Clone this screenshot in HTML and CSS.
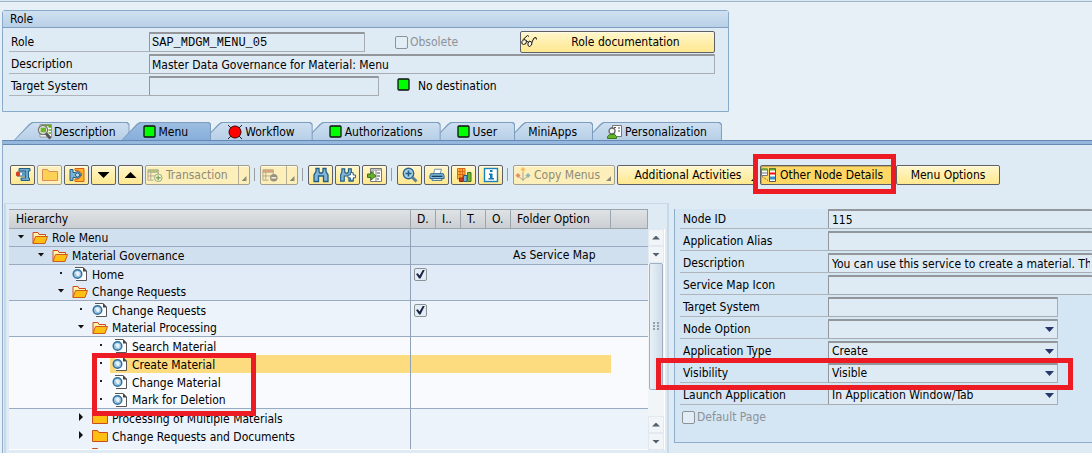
FILE: index.html
```html
<!DOCTYPE html>
<html lang="en">
<head>
<meta charset="utf-8">
<title>Change Roles</title>
<link rel="stylesheet" href="styles.css">
</head>
<body>
<svg class="sprite" aria-hidden="true">
  <symbol id="i-open" viewBox="0 0 16 14"><path d="M1 12.500V1.500H6L7 3.500H13.500V6" fill="#fff3b0" stroke="#cf4a1c"/><path d="M1 12.500L3.500 5.500H15.500L13 12.500Z" fill="#fdbf12" stroke="#cf5a1c"/></symbol>
  <symbol id="i-closed" viewBox="0 0 16 14"><path d="M.5 12.500V1.500H5.500L7 3.500H15.500V12.500Z" fill="#fdbf12" stroke="#cf4a1c"/></symbol>
  <symbol id="i-page" viewBox="0 0 16 16"><path d="M3 1.500H11L14.500 5V14.500H4" fill="#fff" stroke="#555"/><path d="M11 1V5.500H15Z" fill="#444"/><circle cx="5.500" cy="8" r="4.300" fill="#9cc3dd" stroke="#2f6f9f" stroke-width="1.400"/><path d="M3 6.500L5.500 5L8 7L7 10H5Z" fill="#e2f1fa"/></symbol>
  <symbol id="i-green" viewBox="0 0 14 14"><rect x="1" y="1" width="11" height="11" rx="1" fill="#0f0" stroke="#111" stroke-width="1.300"/></symbol>
  <symbol id="i-red" viewBox="0 0 16 16"><path d="M1 1L15 15M15 1L1 15" stroke="#222"/><circle cx="8" cy="8" r="6" fill="#f00" stroke="#400"/></symbol>
  <symbol id="i-find" viewBox="0 0 16 16"><path d="M3 .5H14.500V13H3Z" fill="#fff" stroke="#999"/><path d="M11.500 3H14M11.500 6H14M11.500 9H14M5 1.500H14" stroke="#68a525" stroke-width="1.600"/><circle cx="6" cy="6" r="4.500" fill="#fff" stroke="#777" stroke-width="1.400"/><rect x="3.500" y="3.500" width="5.500" height="5" fill="#72b52c"/><path d="M9 9.500L13.500 14.500" stroke="#555" stroke-width="3"/></symbol>
  <symbol id="i-person" viewBox="0 0 16 16"><path d="M5.500 4V1.500H14.500V12.500H10" fill="#fff" stroke="#777"/><path d="M11 4H13M11 7H13M7 3.500H9" stroke="#555"/><circle cx="5" cy="7" r="3" fill="#f4f4f4" stroke="#666" stroke-width="1.300"/><path d="M.5 14.500V12.500L2.500 10.500H7.500L9.500 12.500V14.500Z" fill="#65b22e" stroke="#3d7d17"/></symbol>
  <symbol id="i-glasses" viewBox="0 0 16 16"><path d="M1.500 6L6.500 1.500L8 2.500M10.500 9L13 4L15 3.500L15.500 5.500M5.500 7.500L7.500 8" fill="none" stroke="#111"/><path d="M1 7.500L3 5.500L5.500 6.500L5 9.500L2.500 10.500L.8 9.500ZM7 9.500L8.500 7L11 8.500L10.500 11L8.500 12.500L7 11.500Z" fill="#fffbe6" stroke="#111"/></symbol>
  <symbol id="i-clamp" viewBox="0 0 16 16"><path d="M4 1.500H15V4H13.500V11H14.500V13.500H6V11H10.500V4H4Z" fill="#70a9ce" stroke="#245f88"/><path d="M2 5H10.500V9H2Z" fill="#f4f8fa" stroke="#245f88"/><path d="M7 5.500H10.500V8.500H7Z" fill="#4f98c5"/><circle cx="3" cy="7" r="2.200" fill="#e1391d"/></symbol>
  <symbol id="i-cut" viewBox="0 0 16 16"><path d="M6 1.500H15V14.500H6V12H9L12.500 9V6L9 3.500H6Z" fill="#fbb52b" stroke="#dd5d18"/><path d="M1 2.500H4V5.500H6Q10 3 12 8Q10 12.500 6 10.500H4V13.500H1Z" fill="#78b1d4" stroke="#245f88"/><circle cx="8.500" cy="8" r="2" fill="#c8e2f1" stroke="#245f88"/></symbol>
  <symbol id="i-addrow" viewBox="0 0 17 16"><path d="M1 2.500H12V5H1Z" fill="#80bb40" stroke="#777"/><path d="M1 5V13.500H7M1 9H9M4 5V13M12 5V7" fill="none" stroke="#777"/><circle cx="12" cy="11" r="4" fill="#eef8df" stroke="#557b4c"/><path d="M12 8.500V13.500M9.500 11H14.500" stroke="#36772f" stroke-width="1.500"/></symbol>
  <symbol id="i-delrow" viewBox="0 0 17 16"><path d="M1 2.500H12V5H1Z" fill="#ed733b" stroke="#777"/><path d="M1 5V13.500H7M1 9H9M4 5V13M12 5V7" fill="none" stroke="#777"/><circle cx="12.500" cy="11" r="4" fill="#555"/><path d="M10 11H15" stroke="#fff" stroke-width="1.500"/></symbol>
  <symbol id="i-bino" viewBox="0 0 16 16"><path d="M3 1.500H6V4.500L7 6H9L10 4.500V1.500H13V4.500L15 8V14.500H10.500V9H5.500V14.500H1V8L3 4.500Z" fill="#83b6d6" stroke="#1f5d87" stroke-width="1.300"/></symbol>
  <symbol id="i-binoplus" viewBox="0 0 17 16"><path d="M2 1.500H5V4.500L6 6H8L9 4.500V1.500H12V4.500L14 8V14.500H9.500V9H4.500V14.500H.7V8L2 4.500Z" fill="#83b6d6" stroke="#1f5d87" stroke-width="1.200"/><path d="M11 5.500H14V8H16.500V11H14V13.500H11V11H8.500V8H11Z" fill="#fff" stroke="#1f5d87"/></symbol>
  <symbol id="i-import" viewBox="0 0 16 16"><path d="M3.500 1.500H14.500V14.500H3.500Z" fill="#fff" stroke="#777"/><path d="M4 3H14M9 3V14" stroke="#aaa" stroke-width="1.500"/><path d="M10 6H13M10 9H13M10 12H12M5 5H7" stroke="#444"/><path d="M.5 7H4V4.500L9 9L4 13V10.500H.5Z" fill="#68ad2d" stroke="#3b771a"/></symbol>
  <symbol id="i-zoom" viewBox="0 0 16 16"><circle cx="6.500" cy="6.500" r="5.200" fill="#a9d0e6" stroke="#2a6690" stroke-width="1.400"/><path d="M6.500 3.500V9.500M3.500 6.500H9.500" stroke="#205c86" stroke-width="1.600"/><path d="M10.500 10.500L14.500 14.500" stroke="#607d92" stroke-width="3"/></symbol>
  <symbol id="i-print" viewBox="0 0 18 16"><path d="M5 7L6.500 1.500H14L12.500 7Z" fill="#fff" stroke="#64869c"/><path d="M2 6.500H16L17 9V12H1V9Z" fill="#83b6d6" stroke="#1f5d87"/><path d="M3 9.500H15" stroke="#173f5d" stroke-width="1.500"/><path d="M3.500 12H14.500V14H3.500Z" fill="#fff" stroke="#1f5d87"/></symbol>
  <symbol id="i-chart" viewBox="0 0 16 16"><path d="M1.500 1.500H9V12H1.500Z" fill="#ffb62d" stroke="#dd671b"/><path d="M4 2V12M6.500 2V12M1 4.500H9M1 7.500H9" stroke="#dd671b"/><path d="M3.500 11V14.500H7V11Z" fill="#e1391d" stroke="#842c18"/><path d="M7.500 8.500V14.500H11V8.500Z" fill="#79b3d7" stroke="#245f88"/><path d="M11.500 5.500V14.500H15V5.500Z" fill="#71b337" stroke="#3b771a"/></symbol>
  <symbol id="i-info" viewBox="0 0 16 16"><rect x="1.500" y="1.500" width="13" height="13" fill="#fff" stroke="#1683bd" stroke-width="1.400"/><path d="M7 3H9.500V5H7ZM6 6.500H9.500V11H11V12.500H5.500V11H7V8H6Z" fill="#1678b2"/></symbol>
  <symbol id="i-copy" viewBox="0 0 16 16"><path d="M8 5V14M3 9L8 13L13 9" fill="none" stroke="#777"/><path d="M8 0L10.500 2.500L8 5L5.500 2.500Z" fill="#f59a28"/><path d="M3 6L5.500 8.500L3 11L.5 8.500Z" fill="#d64f32"/><path d="M13 6L15.500 8.500L13 11L10.500 8.500Z" fill="#4c8eb9"/></symbol>
  <symbol id="i-details" viewBox="0 0 16 15"><path d="M.5 1.500H6.500V8H.5Z" fill="#fff" stroke="#777"/><path d="M1 2H6.500" stroke="#64a52b" stroke-width="2"/><path d="M1 5.500H6" stroke="#777"/><path d="M8.500 1H14.500V14H8.500Z" fill="#fff" stroke="#555"/><path d="M9 2H14" stroke="#64a52b" stroke-width="2"/><path d="M9 6H14" stroke="#e11" stroke-width="2"/><path d="M9 10.500H14" stroke="#3192cc" stroke-width="3"/><path d="M1 9L7 13" stroke="#555" stroke-dasharray="1 1"/></symbol>
</svg>

<main class="page">
  <section class="role-box">
    <h1 class="role-title">Role</h1>
    <div class="role-form">
      <label class="lbl" for="role">Role</label>
      <div class="line">
        <input class="field field-role mono" id="role" value="SAP_MDGM_MENU_05" readonly>
        <label class="check muted"><input type="checkbox" class="box" disabled>Obsolete</label>
        <button class="btn doc-btn"><svg class="ico"><use href="#i-glasses"/></svg><span class="grow">Role documentation</span></button>
      </div>
      <label class="lbl" for="desc">Description</label>
      <input class="field" id="desc" value="Master Data Governance for Material: Menu" readonly>
      <label class="lbl" for="target">Target System</label>
      <div class="line">
        <input class="field field-target" id="target" readonly>
        <span class="status"><svg class="ico-s"><use href="#i-green"/></svg>No destination</span>
      </div>
    </div>
  </section>

  <nav class="tabs" role="tablist">
    <button class="tab tab-first" role="tab"><svg class="ico"><use href="#i-find"/></svg>Description</button>
    <button class="tab active" role="tab" aria-selected="true"><svg class="ico-s"><use href="#i-green"/></svg>Menu</button>
    <button class="tab" role="tab"><svg class="ico"><use href="#i-red"/></svg>Workflow</button>
    <button class="tab" role="tab"><svg class="ico-s"><use href="#i-green"/></svg>Authorizations</button>
    <button class="tab" role="tab"><svg class="ico-s"><use href="#i-green"/></svg>User</button>
    <button class="tab tab-text" role="tab">MiniApps</button>
    <button class="tab tab-last" role="tab"><svg class="ico"><use href="#i-person"/></svg>Personalization</button>
  </nav>

  <section class="panel">
    <div class="toolbar" role="toolbar">
      <button class="btn sq" aria-label="Insert"><svg class="ico"><use href="#i-clamp"/></svg></button>
      <button class="btn sq off" disabled aria-label="Folder"><svg class="ico"><use href="#i-closed"/></svg></button>
      <button class="btn sq" aria-label="Reassign"><svg class="ico"><use href="#i-cut"/></svg></button>
      <button class="btn sq" aria-label="Down"><span class="big down"></span></button>
      <button class="btn sq" aria-label="Up"><span class="big up"></span></button>
      <button class="btn off split transaction" disabled><svg class="ico"><use href="#i-addrow"/></svg><span>Transaction</span><span class="drop"></span></button>
      <span class="sep"></span>
      <button class="btn off split remove" disabled aria-label="Delete"><svg class="ico"><use href="#i-delrow"/></svg><span class="drop"></span></button>
      <span class="sep"></span>
      <button class="btn sq" aria-label="Find"><svg class="ico"><use href="#i-bino"/></svg></button>
      <button class="btn sq" aria-label="Find next"><svg class="ico"><use href="#i-binoplus"/></svg></button>
      <button class="btn sq" aria-label="Import"><svg class="ico"><use href="#i-import"/></svg></button>
      <span class="sep"></span>
      <button class="btn sq" aria-label="Preview"><svg class="ico"><use href="#i-zoom"/></svg></button>
      <button class="btn sq" aria-label="Print"><svg class="ico"><use href="#i-print"/></svg></button>
      <button class="btn sq" aria-label="Chart"><svg class="ico"><use href="#i-chart"/></svg></button>
      <button class="btn sq" aria-label="Information"><svg class="ico"><use href="#i-info"/></svg></button>
      <span class="sep"></span>
      <button class="btn off split copy" disabled><svg class="ico"><use href="#i-copy"/></svg><span>Copy Menus</span><span class="drop plain"></span></button>
      <button class="btn activities"><span class="grow">Additional Activities</span><span class="drop plain"></span></button>
      <div class="marked"><button class="btn pressed" aria-pressed="true"><svg class="ico"><use href="#i-details"/></svg>Other Node Details</button><span class="mark mark-button"></span></div>
      <button class="btn options">Menu Options</button>
    </div>

    <div class="split-view">
      <div class="tree-frame">
        <div class="tree-view">
          <table class="tree">
            <colgroup><col><col class="c-s"><col class="c-s"><col class="c-s"><col class="c-s"><col class="c-opt"><col class="c-end"></colgroup>
            <thead><tr><th class="h-main">Hierarchy</th><th>D.</th><th>I..</th><th>T.</th><th>O.</th><th>Folder Option</th><th></th></tr></thead>
            <tbody>
              <tr class="t1 rule"><td><div class="node l1"><i class="tg open"></i><span class="item"><svg class="ico"><use href="#i-open"/></svg>Role Menu</span></div></td><td></td><td></td><td></td><td></td><td></td><td></td></tr>
              <tr class="t1 rule"><td><div class="node l2"><i class="tg open"></i><span class="item"><svg class="ico"><use href="#i-open"/></svg>Material Governance</span></div></td><td></td><td></td><td></td><td></td><td>As Service Map</td><td></td></tr>
              <tr class="t2"><td><div class="node l3"><i class="tg dot"></i><span class="item"><svg class="ico"><use href="#i-page"/></svg>Home</span></div></td><td><input type="checkbox" class="box" checked aria-label="Home"></td><td></td><td></td><td></td><td></td><td></td></tr>
              <tr class="t2 rule"><td><div class="node l3"><i class="tg open"></i><span class="item"><svg class="ico"><use href="#i-open"/></svg>Change Requests</span></div></td><td></td><td></td><td></td><td></td><td></td><td></td></tr>
              <tr class="t3"><td><div class="node l4"><i class="tg dot"></i><span class="item"><svg class="ico"><use href="#i-page"/></svg>Change Requests</span></div></td><td><input type="checkbox" class="box" checked aria-label="Change Requests"></td><td></td><td></td><td></td><td></td><td></td></tr>
              <tr class="t3 rule"><td><div class="node l4"><i class="tg open"></i><span class="item"><svg class="ico"><use href="#i-open"/></svg>Material Processing</span></div></td><td></td><td></td><td></td><td></td><td></td><td></td></tr>
              <tr class="t4"><td><div class="node l5"><i class="tg dot"></i><span class="item"><svg class="ico"><use href="#i-page"/></svg>Search Material</span></div></td><td></td><td></td><td></td><td></td><td></td><td></td></tr>
              <tr class="t4 sel"><td><div class="node l5"><i class="tg dot"></i><span class="item"><svg class="ico"><use href="#i-page"/></svg>Create Material</span></div></td><td></td><td></td><td></td><td></td><td></td><td></td></tr>
              <tr class="t4"><td><div class="node l5"><i class="tg dot"></i><span class="item"><svg class="ico"><use href="#i-page"/></svg>Change Material</span></div></td><td></td><td></td><td></td><td></td><td></td><td></td></tr>
              <tr class="t4 rule"><td><div class="node l5"><i class="tg dot"></i><span class="item"><svg class="ico"><use href="#i-page"/></svg>Mark for Deletion</span></div></td><td></td><td></td><td></td><td></td><td></td><td></td></tr>
              <tr class="t3"><td><div class="node l4"><i class="tg shut"></i><span class="item"><svg class="ico"><use href="#i-closed"/></svg>Processing of Multiple Materials</span></div></td><td></td><td></td><td></td><td></td><td></td><td></td></tr>
              <tr class="t3"><td><div class="node l4"><i class="tg shut"></i><span class="item"><svg class="ico"><use href="#i-closed"/></svg>Change Requests and Documents</span></div></td><td></td><td></td><td></td><td></td><td></td><td></td></tr>
              <tr class="t3"><td><div class="node l4"><i class="tg"></i><span class="item"><svg class="ico"><use href="#i-closed"/></svg></span></div></td><td></td><td></td><td></td><td></td><td></td><td></td></tr>
            </tbody>
          </table>
          <span class="mark mark-nodes"></span>
        </div>
        <div class="scroll" aria-hidden="true">
          <span class="sb sb-up"></span><span class="sb sb-down"></span>
          <span class="track"><span class="thumb"><span class="grip"></span></span></span>
          <span class="sb sb-up"></span><span class="sb sb-down"></span>
        </div>
      </div>

      <div class="details">
        <label class="lbl" for="nid">Node ID</label><input class="field wide" id="nid" value="115" readonly>
        <label class="lbl" for="alias">Application Alias</label><input class="field wide" id="alias" readonly>
        <label class="lbl" for="ndesc">Description</label><input class="field wide" id="ndesc" value="You can use this service to create a material. Th" readonly>
        <label class="lbl" for="smi">Service Map Icon</label><input class="field wide" id="smi" readonly>
        <label class="lbl" for="tsys">Target System</label><input class="field short" id="tsys" readonly>
        <label class="lbl" for="nopt">Node Option</label><div class="pick"><select class="field" id="nopt"><option></option></select></div>
        <label class="lbl" for="atype">Application Type</label><div class="pick"><select class="field" id="atype"><option>Create</option></select></div>
        <label class="lbl" for="vis">Visibility</label><div class="pick"><select class="field" id="vis"><option>Visible</option></select></div>
        <label class="lbl" for="launch">Launch Application</label><div class="pick"><select class="field" id="launch"><option>In Application Window/Tab</option></select></div>
        <label class="check muted default-page"><input type="checkbox" class="box" disabled>Default Page</label>
        <span class="mark mark-row"></span>
      </div>
    </div>
  </section>
</main>
</body>
</html>
```
FILE: styles.css
```css
* { box-sizing: border-box; }
body {
  margin: 0;
  height: 100vh;
  overflow: hidden;
  background: #e8f0f7;
  color: #000;
  font: 12px/16px "DejaVu Sans Condensed", "DejaVu Sans", "Noto Sans", sans-serif;
}
button, input, select { font: inherit; color: inherit; margin: 0; }
.sprite { display: none; }
.ico { width: 16px; height: 16px; flex: none; }
.ico-s { width: 14px; height: 14px; flex: none; }
.page {
  display: flex;
  flex-direction: column;
  min-height: 100vh;
  border-top: 1px solid #dce7f0;
  padding-left: 2px;
}
.page::before { content: ""; height: 1px; margin-left: -2px; background: #9db6c8; }

/* Role header */
.role-box {
  width: 67%;
  max-width: 727px;
  margin-top: 8px;
  padding-bottom: 15px;
  border: 1px solid #88aacb;
  border-radius: 3px 3px 0 0;
  background: #deeaf4;
}
.role-title {
  margin: 0;
  height: 17px;
  padding-left: 7px;
  border-bottom: 1px solid #7f9fc2;
  background: linear-gradient(#cfe0f0, #b9d0e7);
  font-size: 12px;
  font-weight: normal;
  line-height: 16px;
}
.role-form {
  display: grid;
  grid-template-columns: 140px 1fr;
  grid-auto-rows: 20px;
  row-gap: 2px;
  padding: 4px 13px 0 6px;
}
.lbl { padding-left: 2px; border-bottom: 1px solid #aeb4b9; line-height: 21px; white-space: nowrap; }
.field {
  width: 100%;
  min-width: 0;
  height: 20px;
  padding: 0 2px;
  border: 1px solid #a8acb0;
  border-top: 2px solid #93979b;
  border-left-color: #93979b;
  border-radius: 1px;
  background: #deebf5;
  outline: none;
}
.line { display: flex; align-items: center; min-width: 0; }
.field.mono { font-family: "Liberation Mono", monospace; }
.field-role { width: 216px; }
.field-target { width: 230px; }
.check { display: flex; align-items: center; gap: 2px; margin-left: 30px; }
.muted { color: #8c9298; }
.box {
  appearance: none;
  flex: none;
  display: grid;
  place-items: center;
  width: 13px;
  height: 13px;
  border: 1px solid #8d9297;
  border-radius: 2px;
  background: #e3edf5;
}
.box:checked::before {
  content: "";
  width: 9px;
  height: 9px;
  background: #1c2545;
  clip-path: polygon(0 50%, 20% 42%, 40% 68%, 78% 0, 100% 0, 50% 100%, 34% 100%);
}
.status { display: flex; align-items: center; gap: 7px; margin-left: 18px; }
.status .ico-s { margin-bottom: 2px; }

/* Buttons */
.btn {
  display: flex;
  align-items: center;
  justify-content: center;
  height: 20px;
  padding: 0;
  border: 1px solid #5f6063;
  border-radius: 2px;
  background: linear-gradient(#fff6cc, #ffe88f);
  box-shadow: inset 0 1px #fffbe6;
  white-space: nowrap;
}
.doc-btn { width: 195px; height: 22px; margin-left: auto; }
.grow { flex: 1; text-align: center; }
.sq { width: 25px; }
.off { border-color: #a39f8e; background: #fcefba; color: #8f8b78; }
.off .ico { opacity: .6; }
.split { justify-content: flex-start; padding-left: 1px; gap: 3px; }
.drop {
  align-self: stretch;
  width: 11px;
  margin-left: auto;
  border-left: 1px solid #b5ae93;
  display: flex;
  align-items: flex-end;
  justify-content: center;
}
.drop::after {
  content: "";
  width: 5px;
  height: 5px;
  margin-bottom: 3px;
  background: currentColor;
  clip-path: polygon(100% 0, 100% 100%, 0 100%);
}
.plain { border-left: 0; margin-left: auto; }
.transaction { width: 105px; }
.remove { width: 38px; }
.copy { width: 102px; }
.activities { width: 141px; padding-left: 8px; }
.activities .drop { width: 7px; }
.options { width: 104px; }
.pressed { width: 134px; gap: 3px; justify-content: flex-start; background: #ffd765; box-shadow: inset 1px 1px #c9a955; }
.big { width: 12px; height: 6px; background: #000; }
.down { clip-path: polygon(0 0, 100% 0, 50% 100%); }
.up { clip-path: polygon(50% 0, 100% 100%, 0 100%); }

/* Tabs */
.tabs { display: flex; height: 18px; margin-top: 10px; padding-left: 12px; isolation: isolate; }
.tab {
  position: relative;
  z-index: 1;
  display: flex;
  align-items: center;
  height: 18px;
  margin-left: -8px;
  padding: 2px 18px 0 24px;
  gap: 2px;
  border: 0;
  background: none;
  white-space: nowrap;
}
.tab::before, .tab::after {
  content: "";
  position: absolute;
  z-index: -1;
  inset: 0;
  background: #7d9dbf;
  clip-path: polygon(0 100%, 15px 2px, 18px 0, calc(100% - 2px) 0, 100% 2px, 100% 100%);
}
.tab::after {
  inset: 1px 1px 0;
  background: linear-gradient(#cddff0, #b7cfe7);
}
.tab:nth-child(3) { z-index: 0; }
.tab:nth-child(4) { z-index: -1; }
.tab:nth-child(5) { z-index: -2; }
.tab:nth-child(6) { z-index: -3; }
.tab:nth-child(7) { z-index: -4; }
.tab-first { margin-left: 0; padding-left: 23px; padding-right: 14px; gap: 1px; }
.tab.active { z-index: 3; padding-left: 21px; padding-right: 23px; }
.tab.active::after { background: linear-gradient(#9cbde0, #87aedb); }
.tab-text { padding-left: 21px; padding-right: 16px; }
.tab-last { padding-left: 22px; padding-right: 15px; }

/* Menu tab contents */
.panel {
  flex: 1;
  border-top: 1px solid #6489b5;
  border-left: 1px solid #8eaccb;
  background: #dfebf4;
}
.panel::before { content: ""; display: block; height: 3px; background: #95b7dd; border-bottom: 1px solid #6489b5; }
.toolbar { display: flex; align-items: flex-start; gap: 2px; padding: 20px 0 0 7px; }
.sep { width: 1px; height: 13px; margin: 3px 3px 0 2px; background: #999da0; }
.marked { position: relative; }
.mark { position: absolute; z-index: 5; border: 5px solid #ed1c24; pointer-events: none; }
.mark-button { inset: -11px -2px -9px -7px; }

.split-view {
  display: grid;
  grid-template-columns: minmax(0, 665fr) minmax(0, 418fr);
  column-gap: 5px;
  margin-top: 18px;
  padding-left: 1px;
}
.tree-frame {
  display: flex;
  padding: 5px 2px 5px 3px;
  border-style: solid;
  border-color: #c8d9e8;
  border-width: 1px 2px 0 2px;
  min-height: 260px;
  align-items: flex-start;
}
.tree-view { position: relative; flex: 1; height: 241px; border-bottom: 1px solid #fff; overflow: hidden; }
.tree { width: 100%; table-layout: fixed; border-collapse: separate; border-spacing: 0; }
.c-s { width: 25px; }
.c-opt { width: 100px; }
.c-end { width: 37px; }
.tree th {
  height: 20px;
  padding: 0 0 0 6px;
  border: solid #9aa5ae;
  border-width: 1px 1px 1px 0;
  background: linear-gradient(#dfe3e5, #cbcfd3);
  font-weight: normal;
  text-align: left;
  line-height: 18px;
  white-space: nowrap;
}
.tree th.h-main { padding-left: 7px; }
.tree td { height: 18px; padding: 0 0 0 2px; line-height: 17px; white-space: nowrap; }
.tree td:first-child { padding: 0; border-right: 1px solid #91a2b8; }
.rule td { border-bottom: 1px solid #98abc0; }
.t1 { background: #d1e0ef; }
.t2 { background: #e1ebf7; }
.t3 { background: #edf3fb; }
.t4 { background: #f8fafe; }
.node { display: flex; height: 17px; }
.l1 { padding-left: 3px; }
.l2 { padding-left: 23px; }
.l3 { padding-left: 43px; }
.l4 { padding-left: 63px; }
.l5 { padding-left: 83px; }
.item { flex: 1; display: flex; align-items: center; gap: 4px; padding: 2px 0 0 2px; }
.item .ico { margin-top: -2px; }
.sel .node { height: 18px; }
.sel .item, .sel td:nth-child(n+2):nth-child(-n+6) { background: #fddc80; }
.tg { width: 18px; display: grid; place-items: center; }
.tg::before { content: ""; margin-bottom: 2px; }
.open::before { width: 7px; height: 4px; background: #111; clip-path: polygon(0 0, 100% 0, 50% 100%); }
.shut::before { width: 4px; height: 8px; background: #111; clip-path: polygon(0 0, 100% 50%, 0 100%); }
.dot::before { width: 2px; height: 2px; background: #222; }
.tree .box { margin-left: 1px; }
.mark-nodes { left: 83px; top: 144px; width: 164px; height: 63px; }

.scroll { display: flex; flex-direction: column; width: 17px; height: 221px; margin-top: 20px; border-right: 1px solid #fff; background: #f2f5f8; }
.sb { height: 17px; display: grid; place-items: center; border: 1px solid #e2e9f0; }
.sb::before { content: ""; width: 8px; height: 4px; background: #53606c; }
.sb-up::before { clip-path: polygon(50% 0, 100% 100%, 0 100%); }
.sb-down::before { clip-path: polygon(0 0, 100% 0, 50% 100%); }
.track { flex: 1; }
.thumb {
  display: grid;
  place-items: center;
  height: 83%;
  margin: 0 1px;
  border: 1px solid #9fb0c0;
  border-radius: 2px;
  background: linear-gradient(90deg, #e9f1f7, #cddce8);
}
.grip { width: 6px; height: 8px; background: radial-gradient(circle at 1px 1px, #92a1af 1px, transparent 1px) 0 0 / 4px 3px; }

.details {
  position: relative;
  display: grid;
  grid-template-columns: 148px minmax(0, 1fr);
  grid-auto-rows: 20px;
  row-gap: 2px;
  align-self: start;
  margin-top: 6px;
  padding: 0 0 15px 5px;
  border: solid #8eaecb;
  border-width: 0 0 1px 1px;
  background: #d4e5f3;
}
.details .lbl { padding-left: 3px; }
.details .field { padding-left: 3px; }
.wide { border-right: 0; }
.short { max-width: 230px; }
.pick { position: relative; width: 100%; max-width: 230px; }
.pick select { appearance: none; padding-bottom: 1px; }
.pick::after {
  content: "";
  position: absolute;
  top: 8px;
  right: 4px;
  width: 9px;
  height: 5px;
  background: #27376b;
  clip-path: polygon(0 0, 100% 0, 50% 100%);
  pointer-events: none;
}
.default-page { grid-column: 1 / -1; margin-left: 2px; }
.mark-row { left: -19px; top: 149px; width: 417px; height: 32px; }
```
